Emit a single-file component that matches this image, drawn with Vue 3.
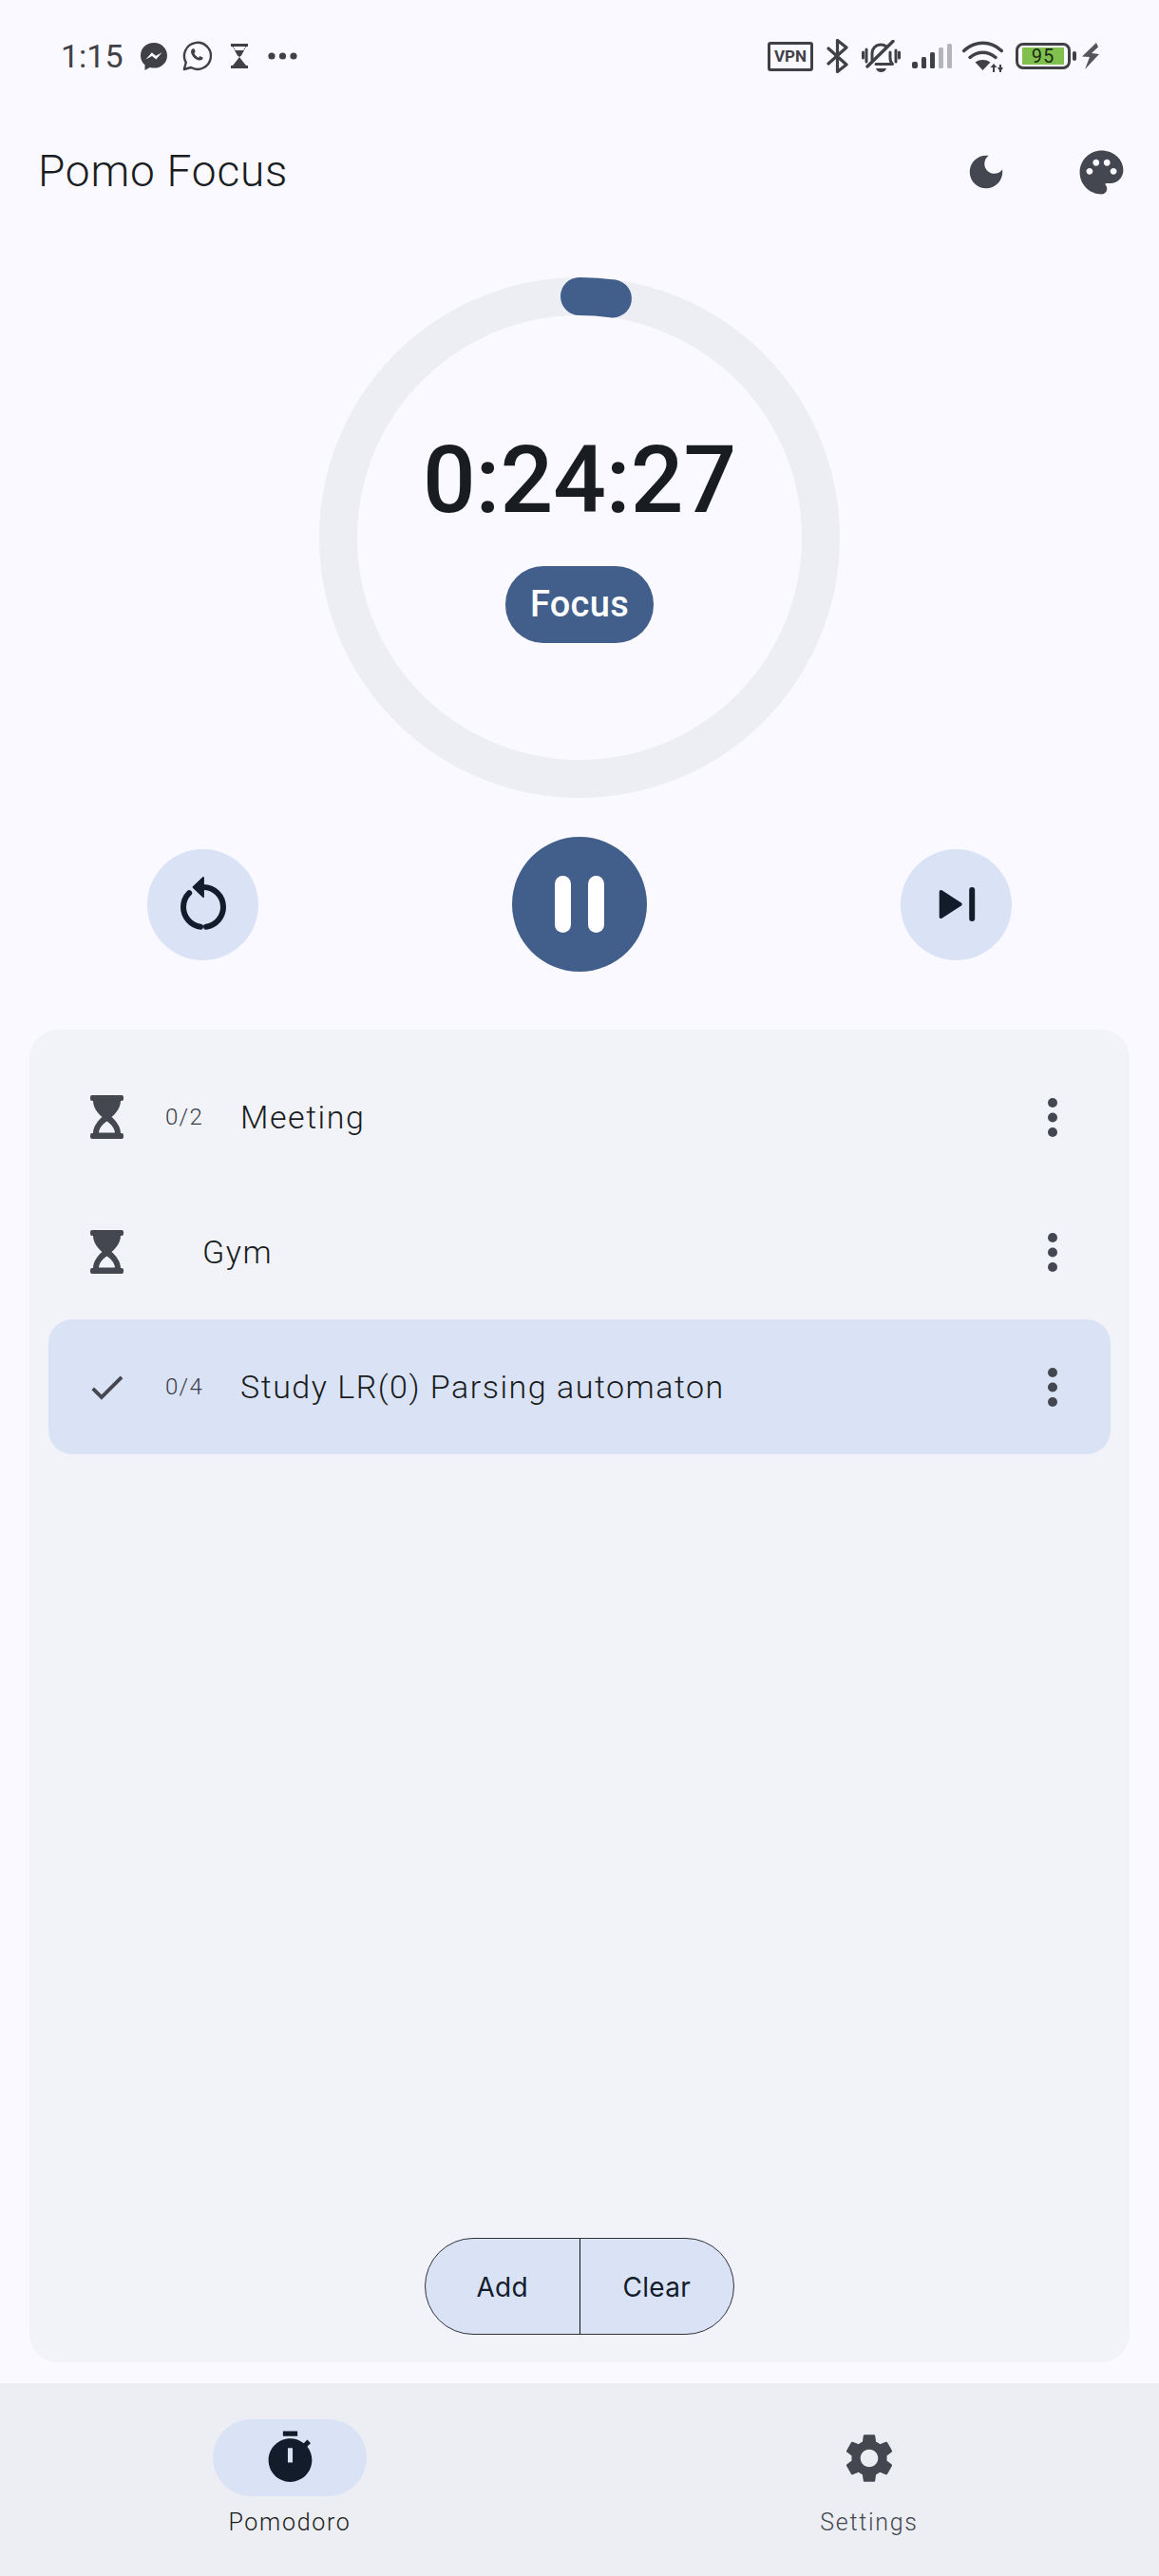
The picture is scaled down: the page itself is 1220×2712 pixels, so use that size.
<template>
  <div class="screen">
    <div class="status-bar">
      <div class="status-left">
        <span class="clock">1:15</span>
        <svg class="st-messenger" width="28" height="29" viewBox="0 0 28 29">
          <path class="ic" d="M14 0C6 0 0 5.800 0 13.400c0 4 1.700 7.500 4.500 9.900V29l5.300-3c1.300.4 2.700.6 4.200.6 8 0 14-5.800 14-13.200S22 0 14 0z" />
          <path fill="#f9f9ff" d="M5.500 17.500l6.300-7.200 4.200 3.400 6.500-3.400-6.200 7.200-4.300-3.500z" />
        </svg>
        <svg class="st-whatsapp" width="31" height="32" viewBox="0 0 31 32">
          <path fill="none" stroke="#3f4146" stroke-width="2.400" stroke-linejoin="round" d="M1.800 30l2-7.200A14 14 0 1 1 9 28z" />
          <path class="ic" d="M11 8.300c-1.700.6-2.500 2.700-1.600 5.200 1.400 3.700 4.900 6.600 8.200 7 2.200.3 4-.8 4.100-2.700l-3.200-1.700-1.500 1.600c-2.100-.8-3.800-2.600-4.600-4.600l1.300-1.500-1.300-3.300z" />
        </svg>
        <svg class="st-glass" width="18" height="26" viewBox="0 0 18 26">
          <path class="ic" d="M0 0h18v3H0zM0 23h18v3H0zM4 7h10l-3 5.500L9 14l-2-1.500zM9 14l3 4 4 5H2l4-5z" />
          <path fill="none" stroke="#3f4146" stroke-width="1" stroke-dasharray="1.500 1" d="M2 3l6 9M16 3l-6 9" />
        </svg>
        <svg class="st-more" width="31" height="8" viewBox="0 0 31 8">
          <circle class="ic" cx="4" cy="4" r="3.600" />
          <circle class="ic" cx="15.500" cy="4" r="3.600" />
          <circle class="ic" cx="27" cy="4" r="3.600" />
        </svg>
      </div>
      <div class="status-right">
        <span class="vpn">VPN</span>
        <svg class="st-bt" width="23" height="36" viewBox="0 0 23 36">
          <path fill="none" stroke="#3f4146" stroke-width="3.200" stroke-linejoin="round" stroke-linecap="round" d="M2 10l19 17-9.500 7.500V1.500L21 9 2 26" />
        </svg>
        <svg class="st-bell" width="41" height="34" viewBox="0 0 41 34">
          <path fill="none" stroke="#3f4146" stroke-width="3" stroke-linecap="round" d="M1.500 13v6M36 11v12M39.500 13v6M5 10v13" />
          <path fill="none" stroke="#3f4146" stroke-width="3" stroke-linecap="round" stroke-linejoin="round" d="M11 21v-7c0-5 4-9 9-9 3 0 5 1 6.500 2.500M30 13v6c0 3 1 5 2.500 6.500H15" />
          <path fill="none" stroke="#3f4146" stroke-width="3.400" stroke-linecap="round" d="M33 1.500L6 28" />
          <path class="ic" d="M15 30h11c-.7 2.400-3 4-5.500 4s-4.800-1.600-5.500-4z" />
        </svg>
        <svg class="st-signal" width="42" height="26" viewBox="0 0 42 26">
          <rect class="ic" x="0" y="19" width="6" height="7" rx="2" />
          <rect class="ic" x="10" y="14" width="5" height="12" rx="1.500" />
          <rect class="ic" x="19" y="9" width="5" height="17" rx="1.500" />
          <rect fill="#b4b5b8" x="28" y="4" width="5" height="22" rx="1.500" />
          <rect fill="#b4b5b8" x="37" y="0" width="5" height="26" rx="1.500" />
        </svg>
        <svg class="st-wifi" width="43" height="33" viewBox="0 0 43 33">
          <path fill="none" stroke="#3f4146" stroke-width="3.400" stroke-linecap="round" d="M1.700 10.500C13 -0.500 30 -0.500 41.300 10.500M8 17.500c8-7 19-7 27 0" />
          <path class="ic" d="M13.500 22.500c5-3.300 11-3.300 16 0L21.500 31z" />
          <path fill="none" stroke="#3f4146" stroke-width="2" d="M33 33v-6M40 33v-8" />
          <path class="ic" d="M29.500 28h7L33 24zM37 28h6l-3 5z" />
        </svg>
        <div class="battery-wrap">
          <div class="battery">
            <span class="battery-fill">95</span>
          </div>
          <span class="battery-nub"></span>
        </div>
        <svg class="st-bolt" width="18" height="28" viewBox="0 0 18 28">
          <path fill="#55565a" d="M15 0L0 14.500l8 .5-5 13 15-16-8-1 7-6.500z" />
        </svg>
      </div>
    </div>

    <header class="app-bar">
      <h1 class="app-title">Pomo Focus</h1>
      <div class="app-actions">
        <svg class="act-moon" width="46" height="46" viewBox="0 0 24 24">
          <path class="muted" d="M12 3c-4.970 0-9 4.030-9 9s4.030 9 9 9 9-4.030 9-9c0-.460-.040-.920-.100-1.360-.980 1.370-2.580 2.260-4.400 2.260-2.980 0-5.400-2.420-5.400-5.400 0-1.810.890-3.420 2.260-4.400-.440-.060-.900-.100-1.360-.100z" />
        </svg>
        <svg class="act-palette" width="55" height="55" viewBox="0 0 24 24">
          <path class="muted" d="M12 2C6.490 2 2 6.490 2 12s4.490 10 10 10c1.380 0 2.500-1.120 2.500-2.500 0-.610-.230-1.200-.640-1.670-.080-.100-.130-.210-.130-.330 0-.280.220-.500.500-.500H16c3.310 0 6-2.690 6-6 0-4.960-4.490-9-10-9zm5.500 11c-.830 0-1.500-.670-1.500-1.500s.670-1.500 1.500-1.500 1.500.670 1.500 1.500-.670 1.500-1.500 1.500zm-3-4c-.830 0-1.500-.670-1.500-1.500S13.670 6 14.500 6s1.500.670 1.500 1.500S15.330 9 14.500 9zM5 11.500c0-.830.670-1.500 1.500-1.500s1.500.670 1.500 1.500S7.330 13 6.500 13 5 12.330 5 11.500zm6-4c0 .830-.670 1.500-1.500 1.500S8 8.330 8 7.500 8.670 6 9.500 6s1.500.670 1.500 1.500z" />
        </svg>
      </div>
    </header>

    <section class="ring">
      <svg class="ring-svg" width="548" height="548" viewBox="0 0 548 548">
        <circle cx="274" cy="274" r="254" fill="none" stroke="#edeef3" stroke-width="40" />
        <circle
          cx="274"
          cy="274"
          r="254"
          fill="none"
          stroke="#415f8a"
          stroke-width="40"
          stroke-linecap="round"
          transform="rotate(-90 274 274)"
          :stroke-dasharray="progressDash"
        />
      </svg>
      <div class="ring-center">
        <div class="time">0:24:27</div>
        <div class="mode">Focus</div>
      </div>
    </section>

    <div class="controls">
      <button class="round-btn">
        <svg width="72" height="72" viewBox="0 0 24 24">
          <path fill="none" stroke="#131c2b" stroke-width="2" stroke-linecap="round" d="M12 6c3.870 0 7 3.130 7 7 0 3.500-2.600 6.400-6 6.900M11 19.900c-3.400-.500-6-3.400-6-6.900 0-1.930.780-3.680 2.050-4.950" />
          <path fill="#131c2b" stroke="#131c2b" stroke-width=".6" stroke-linejoin="round" d="M12 2.600L8.500 6l3.500 3.400z" />
        </svg>
      </button>
      <button class="round-btn primary">
        <span class="pause-bar"></span>
        <span class="pause-bar"></span>
      </button>
      <button class="round-btn">
        <svg width="72" height="72" viewBox="0 0 24 24">
          <path fill="#131c2b" stroke="#131c2b" stroke-width="1.200" stroke-linejoin="round" d="M6.500 7.600L13.300 12l-6.800 4.400z" />
          <rect x="16.400" y="6" width="2" height="12" rx="1" fill="#131c2b" />
        </svg>
      </button>
    </div>

    <main class="task-card">
      <div class="task-list">
        <div v-for="task in tasks" :key="task.title" class="task" :class="{ active: task.active }">
          <span class="lead">
            <svg v-if="task.active" width="45" height="45" viewBox="0 0 24 24">
              <path class="muted" d="M9 16.170L4.830 12l-1.420 1.410L9 19 21 7l-1.410-1.410z" />
            </svg>
            <svg v-else width="35" height="46" viewBox="0 0 35 46">
              <path class="muted" fill-rule="evenodd" d="M2 0h31a2 2 0 0 1 2 2v2a2 2 0 0 1-2 2h-1c0 7-5 13-9.500 17C27 27 32 33 32 40h1a2 2 0 0 1 2 2v2a2 2 0 0 1-2 2H2a2 2 0 0 1-2-2v-2a2 2 0 0 1 2-2h1c0-7 5-13 9.500-17C8 19 3 13 3 6H2a2 2 0 0 1-2-2V2a2 2 0 0 1 2-2zM9 39.500h17c-.500-5.500-4.500-9.500-8.500-12-4 2.500-8 6.500-8.500 12z" />
            </svg>
          </span>
          <span class="count">{{ task.count }}</span>
          <span class="task-title">{{ task.title }}</span>
          <svg class="kebab" width="10" height="41" viewBox="0 0 10 41">
            <circle class="muted" cx="5" cy="5" r="5" />
            <circle class="muted" cx="5" cy="20.500" r="5" />
            <circle class="muted" cx="5" cy="36" r="5" />
          </svg>
        </div>
      </div>
      <div class="segment">
        <button class="segment-btn">Add</button>
        <button class="segment-btn">Clear</button>
      </div>
    </main>

    <nav class="bottom-nav">
      <div class="nav-item">
        <span class="nav-pill on">
          <svg width="61" height="61" viewBox="0 0 24 24">
            <path fill="#131c2b" fill-rule="evenodd" d="M9 1h6v2H9zM19.030 7.390l1.420-1.420c-.430-.510-.900-.990-1.410-1.410l-1.420 1.420C16.070 4.740 14.120 4 12 4c-4.970 0-9 4.030-9 9s4.020 9 9 9 9-4.030 9-9c0-2.120-.740-4.070-1.970-5.610zM13 14h-2V8h2z" />
          </svg>
        </span>
        <span class="nav-label current">Pomodoro</span>
      </div>
      <div class="nav-item">
        <span class="nav-pill">
          <svg width="62" height="62" viewBox="0 0 24 24">
            <path class="muted" d="M19.140 12.940c.040-.300.060-.610.060-.940 0-.320-.020-.640-.070-.940l2.030-1.580c.180-.140.230-.410.120-.610l-1.920-3.320c-.120-.220-.370-.290-.590-.220l-2.390.960c-.500-.380-1.030-.700-1.620-.940l-.360-2.540c-.040-.240-.240-.410-.480-.410h-3.840c-.240 0-.430.170-.470.410l-.360 2.540c-.590.240-1.130.570-1.620.940l-2.390-.960c-.220-.080-.470 0-.590.220L2.740 8.870c-.120.210-.080.470.120.610l2.030 1.580c-.050.300-.090.630-.090.940s.020.640.070.940l-2.030 1.580c-.180.140-.230.410-.12.610l1.920 3.320c.120.220.370.290.590.220l2.390-.960c.500.380 1.030.700 1.620.940l.360 2.540c.050.240.240.410.480.410h3.840c.240 0 .440-.17.470-.41l.360-2.540c.590-.240 1.130-.56 1.620-.94l2.390.96c.22.080.47 0 .59-.22l1.920-3.320c.12-.22.07-.47-.12-.61l-2.010-1.580zM12 15.600c-1.980 0-3.600-1.620-3.600-3.600s1.620-3.600 3.600-3.600 3.600 1.620 3.600 3.600-1.620 3.600-3.600 3.600z" />
          </svg>
        </span>
        <span class="nav-label">Settings</span>
      </div>
    </nav>
  </div>
</template>

<script setup>
const totalSeconds = 25 * 60;
const elapsedSeconds = 33;
const circumference = 2 * Math.PI * 254;
const progressDash = `${(circumference * elapsedSeconds) / totalSeconds} ${circumference}`;

const tasks = [
  { title: "Meeting", count: "0/2", active: false },
  { title: "Gym", count: "", active: false },
  { title: "Study LR(0) Parsing automaton", count: "0/4", active: true },
];
</script>

<style scoped>
.screen {
  width: 1220px;
  height: 2712px;
  display: flex;
  flex-direction: column;
  overflow: hidden;
  background: #f9f9ff;
  color: #191c20;
  font-family: Roboto, "Liberation Sans", sans-serif;
}

.ic {
  fill: #3f4146;
}

.muted {
  fill: #44474f;
}

.status-bar {
  height: 118px;
  flex: none;
  display: flex;
  align-items: center;
  justify-content: space-between;
  padding: 0 63px 0 64px;
}

.status-left,
.status-right {
  display: flex;
  align-items: center;
}

.clock {
  width: 84px;
  font-size: 34px;
  color: #3f4146;
}

.st-whatsapp {
  margin-left: 16px;
}

.st-glass {
  margin-left: 20px;
}

.st-more {
  margin-left: 21px;
}

.vpn {
  box-sizing: border-box;
  width: 48px;
  height: 31px;
  border: 3px solid #3f4146;
  border-radius: 3px;
  font-size: 17px;
  font-weight: 700;
  line-height: 25px;
  text-align: center;
  color: #3f4146;
}

.st-bt {
  margin-left: 14px;
}

.st-bell {
  margin-left: 14px;
}

.st-signal {
  margin-left: 12px;
}

.st-wifi {
  margin-left: 11px;
}

.battery-wrap {
  display: flex;
  align-items: center;
  margin-left: 13px;
}

.battery {
  box-sizing: border-box;
  width: 58px;
  height: 28px;
  padding: 2px 4px;
  border: 3px solid #3f4146;
  border-radius: 8px;
}

.battery-fill {
  display: block;
  height: 18px;
  background: #7fc04f;
  font-size: 20px;
  line-height: 18px;
  letter-spacing: 1px;
  text-align: center;
  color: #1c2a14;
}

.battery-nub {
  width: 4px;
  height: 10px;
  margin-left: 2px;
  border-radius: 2px;
  background: #3f4146;
}

.st-bolt {
  margin-left: 6px;
}

.app-bar {
  height: 126px;
  flex: none;
  display: flex;
  align-items: center;
  justify-content: space-between;
  padding: 0 33px 0 40px;
}

.app-title {
  margin: 0 0 2px;
  font-size: 46px;
  font-weight: 300;
  letter-spacing: 0.8px;
  color: #191c20;
}

.app-actions {
  display: flex;
  align-items: center;
  gap: 71px;
}

.ring {
  flex: none;
  align-self: center;
  display: grid;
  width: 548px;
  height: 548px;
  margin-top: 48px;
}

.ring-svg,
.ring-center {
  grid-area: 1 / 1;
}

.ring-center {
  display: flex;
  flex-direction: column;
  align-items: center;
  padding-top: 158px;
}

.time {
  font-size: 98px;
  font-weight: 500;
  line-height: 112px;
  color: #191c20;
}

.mode {
  width: 156px;
  height: 81px;
  margin-top: 34px;
  border-radius: 40px;
  background: #415f8a;
  font-size: 38px;
  font-weight: 500;
  line-height: 81px;
  letter-spacing: 0.3px;
  text-align: center;
  color: #fff;
}

.controls {
  flex: none;
  display: flex;
  align-items: center;
  justify-content: center;
  gap: 267px;
  height: 142px;
  margin-top: 41px;
}

.round-btn {
  width: 117px;
  height: 117px;
  padding: 0;
  border: 0;
  border-radius: 50%;
  background: #dae2f5;
  display: flex;
  align-items: center;
  justify-content: center;
}

.round-btn.primary {
  width: 142px;
  height: 142px;
  gap: 18px;
  background: #415f8a;
}

.pause-bar {
  width: 17px;
  height: 60px;
  border-radius: 9px;
  background: #fff;
}

.task-card {
  flex: 1;
  display: flex;
  flex-direction: column;
  margin: 61px 31px 22px;
  padding: 21px 20px 29px;
  border-radius: 30px;
  background: #f2f3f9;
}

.task-list {
  flex: 1;
}

.task {
  height: 142px;
  display: flex;
  align-items: center;
  gap: 39px;
  padding: 0 56px 0 38px;
  border-radius: 25px;
}

.task.active {
  background: #dae2f5;
}

.lead {
  width: 46px;
  height: 46px;
  display: flex;
  align-items: center;
  justify-content: center;
}

.count {
  font-size: 24px;
  font-weight: 300;
  letter-spacing: 1.3px;
  color: #3a3d45;
}

.task-title {
  font-size: 34px;
  font-weight: 300;
  letter-spacing: 1.5px;
  color: #191c20;
}

.kebab {
  margin-left: auto;
}

.segment {
  flex: none;
  align-self: center;
  display: flex;
  box-sizing: border-box;
  width: 326px;
  height: 102px;
  border: 1.500px solid #30333b;
  border-radius: 51px;
  overflow: hidden;
  background: #dae2f5;
}

.segment-btn {
  flex: 1;
  padding: 2px 0 0;
  border: 0;
  background: transparent;
  font-family: Inter, Roboto, sans-serif;
  font-size: 28px;
  letter-spacing: 0.3px;
  color: #131c2b;
}

.segment-btn + .segment-btn {
  border-left: 1.500px solid #111;
}

.bottom-nav {
  height: 203px;
  flex: none;
  display: flex;
  background: #edeef3;
}

.nav-item {
  flex: 1;
  display: flex;
  flex-direction: column;
  align-items: center;
  padding-top: 38px;
}

.nav-pill {
  width: 162px;
  height: 81px;
  border-radius: 41px;
  display: flex;
  align-items: center;
  justify-content: center;
}

.nav-pill.on {
  background: #dae2f5;
}

.nav-label {
  margin-top: 12px;
  font-size: 25px;
  font-weight: 300;
  line-height: 32px;
  letter-spacing: 1.7px;
  color: #44474f;
}

.nav-label.current {
  color: #191c20;
}
</style>

<style>
html,
body {
  margin: 0;
  background: #f9f9ff;
}
</style>
